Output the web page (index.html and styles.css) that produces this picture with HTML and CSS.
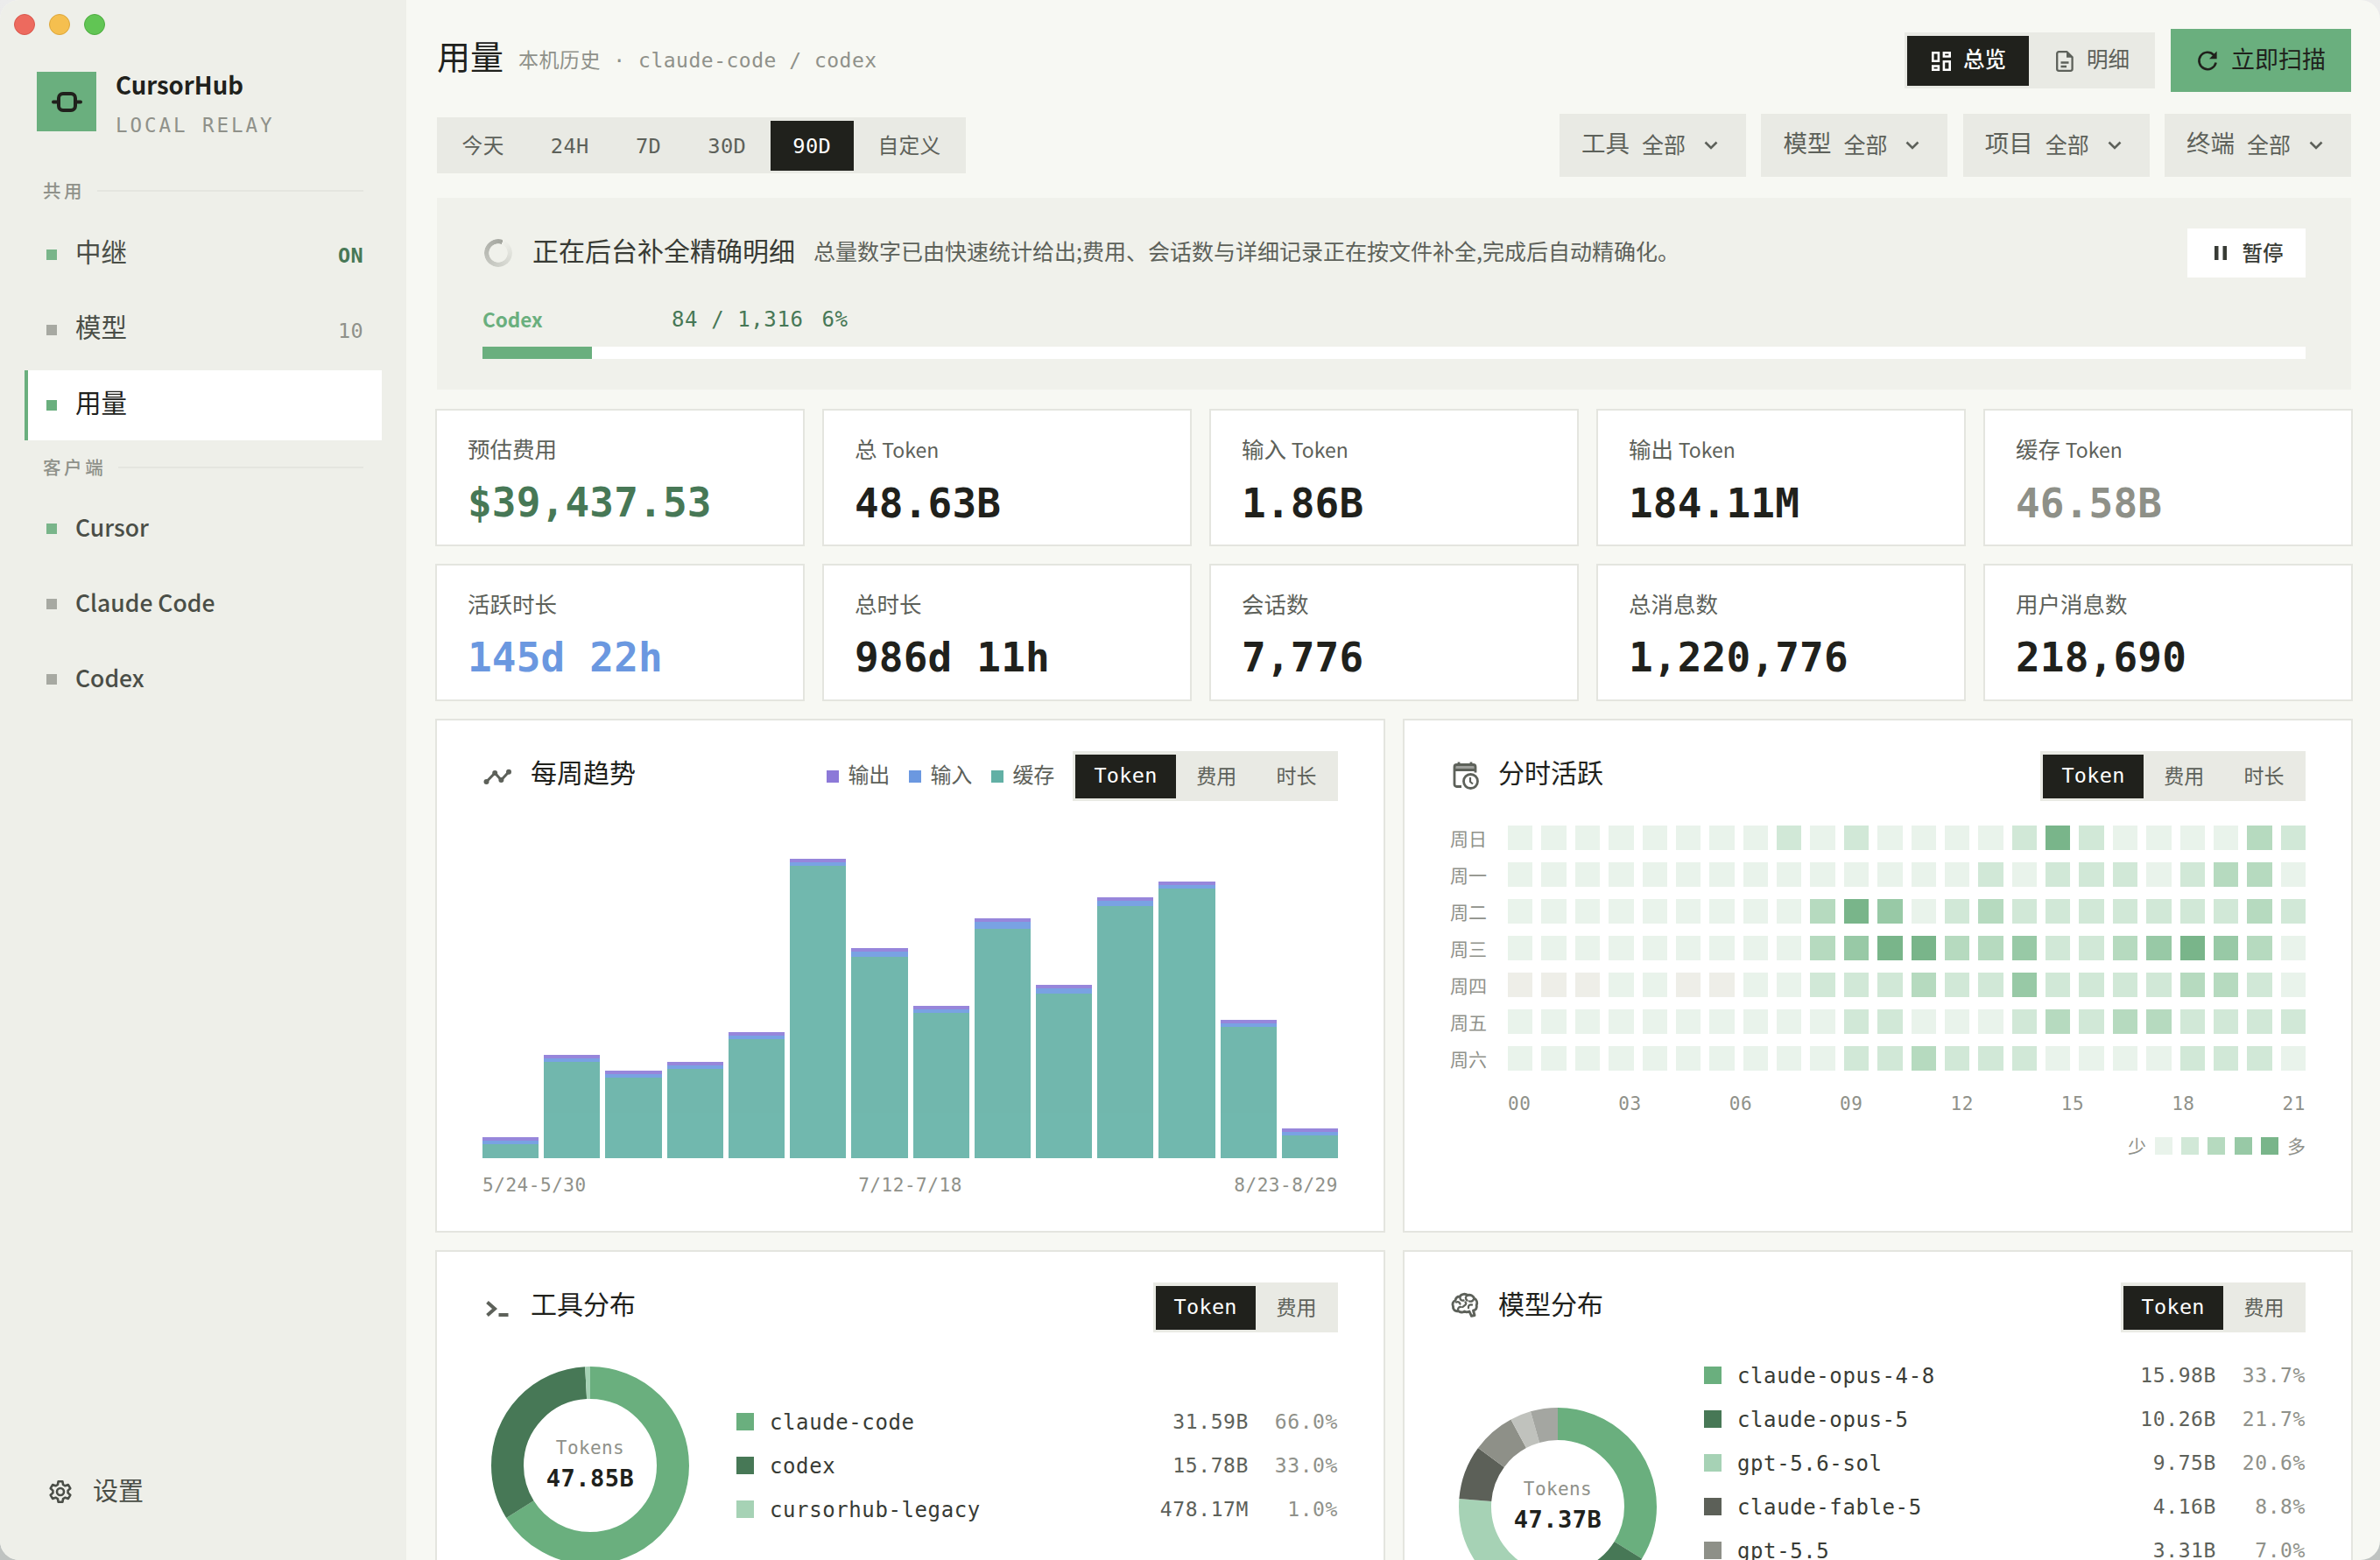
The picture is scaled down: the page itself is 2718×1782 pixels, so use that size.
FILE: index.html
```html
<!DOCTYPE html>
<html lang="zh-CN">
<head>
    <meta charset="UTF-8">
    <meta name="viewport" content="width=device-width, initial-scale=1.0">
    <title>CursorHub</title>
    <link rel="stylesheet" href="styles.css">
</head>
<body>
    <div class="window">
        <aside class="sidebar">
            <div class="lights">
                <span class="light red"></span>
                <span class="light yellow"></span>
                <span class="light green"></span>
            </div>

            <div class="brand">
                <div class="logo">
                    <svg viewBox="0 0 68 68" fill="none" stroke="#20211c" stroke-width="4" stroke-linecap="round">
                        <rect x="25" y="25" width="19" height="19" rx="5"/>
                        <path d="M19 34.5h6M44 34.5h6"/>
                    </svg>
                </div>
                <div>
                    <div class="brand-name">CursorHub</div>
                    <div class="brand-sub">LOCAL RELAY</div>
                </div>
            </div>

            <div class="nav-label first">共用</div>
            <nav class="nav">
                <a class="nav-item on"><i></i><span>中继</span><b class="state">ON</b></a>
                <a class="nav-item"><i></i><span>模型</span><b>10</b></a>
                <a class="nav-item on active"><i></i><span>用量</span></a>
            </nav>
            <div class="nav-label">客户端</div>
            <nav class="nav clients">
                <a class="nav-item on"><i></i><span>Cursor</span></a>
                <a class="nav-item"><i></i><span>Claude Code</span></a>
                <a class="nav-item"><i></i><span>Codex</span></a>
            </nav>

            <a class="settings">
                <svg viewBox="0 0 28 28" fill="none" stroke="currentColor" stroke-width="2.6" stroke-linejoin="round">
                    <path d="M11.6 2.3h4.8l.7 3.6 2.4 1.4 3.4-1.2 2.4 4.1-2.7 2.4v2.8l2.7 2.4-2.4 4.1-3.4-1.2-2.4 1.4-.7 3.6h-4.8l-.7-3.6-2.4-1.4-3.4 1.2-2.4-4.1 2.7-2.4v-2.8l-2.7-2.4 2.4-4.1 3.4 1.2 2.4-1.4z"/>
                    <circle cx="14" cy="14" r="4"/>
                </svg>
                <span>设置</span>
            </a>
        </aside>

        <main class="main">
            <header class="header">
                <h1>用量</h1>
                <span class="header-sub">本机历史 · claude-code / codex</span>
                <div class="segment views">
                    <button class="active">
                        <svg viewBox="0 0 26 26" fill="none" stroke="currentColor" stroke-width="2.6">
                            <path d="M3.3 3.3h6.6v9.4H3.3zM15.9 3.3h6.8v4.2h-6.8zM15.9 13.3h6.8v9.4h-6.8zM3.3 18.5h6.6v4.2H3.3z"/>
                        </svg>
                        <span>总览</span>
                    </button>
                    <button>
                        <svg viewBox="0 0 26 26" fill="none" stroke="currentColor" stroke-width="2.3" stroke-linejoin="round">
                            <path d="M15.5 2.2H6.2a2 2 0 0 0-2 2v17.6a2 2 0 0 0 2 2h13.4a2 2 0 0 0 2-2V8.4z"/>
                            <path d="M15 2.5v6.3h6.4z" fill="currentColor" stroke="none"/>
                            <path d="M8.5 14.5h9M8.5 19h6.5"/>
                        </svg>
                        <span>明细</span>
                    </button>
                </div>
                <button class="scan">
                    <svg viewBox="0 0 26 26" fill="none" stroke="currentColor" stroke-width="2.6">
                        <path d="M22.6 15.5A9.7 9.7 0 1 1 20.2 6.8"/>
                        <path d="M23.6 2.6v8.6H15z" fill="currentColor" stroke="none"/>
                    </svg>
                    <span>立即扫描</span>
                </button>
            </header>

            <div class="toolbar">
                <div class="segment range">
                    <button>今天</button>
                    <button>24H</button>
                    <button>7D</button>
                    <button>30D</button>
                    <button class="active">90D</button>
                    <button>自定义</button>
                </div>
                <div class="filters">
                    <div class="filter"><span>工具</span><em>全部</em><svg viewBox="0 0 24 24"><path d="M5.5 8.5l6.5 6.5 6.5-6.5"/></svg></div>
                    <div class="filter"><span>模型</span><em>全部</em><svg viewBox="0 0 24 24"><path d="M5.5 8.5l6.5 6.5 6.5-6.5"/></svg></div>
                    <div class="filter"><span>项目</span><em>全部</em><svg viewBox="0 0 24 24"><path d="M5.5 8.5l6.5 6.5 6.5-6.5"/></svg></div>
                    <div class="filter"><span>终端</span><em>全部</em><svg viewBox="0 0 24 24"><path d="M5.5 8.5l6.5 6.5 6.5-6.5"/></svg></div>
                </div>
            </div>

            <section class="notice">
                <div class="notice-head">
                    <div class="spinner"></div>
                    <strong>正在后台补全精确明细</strong>
                    <p>总量数字已由快速统计给出;费用、会话数与详细记录正在按文件补全,完成后自动精确化。</p>
                    <button class="pause">
                        <svg viewBox="0 0 14 16" fill="currentColor"><path d="M0 0h4.5v16H0zM9.5 0H14v16H9.5z"/></svg>
                        暂停
                    </button>
                </div>
                <div class="progress-info">
                    <span class="progress-name">Codex</span>
                    <span class="progress-count">84 / 1,316</span>
                    <span class="progress-pct">6%</span>
                </div>
                <div class="progress"><div class="progress-fill" style="width: 6%"></div></div>
            </section>

            <section class="stats">
                <div class="stat green"><label>预估费用</label><strong>$39,437.53</strong></div>
                <div class="stat"><label>总 <small>Token</small></label><strong>48.63B</strong></div>
                <div class="stat"><label>输入 <small>Token</small></label><strong>1.86B</strong></div>
                <div class="stat"><label>输出 <small>Token</small></label><strong>184.11M</strong></div>
                <div class="stat muted"><label>缓存 <small>Token</small></label><strong>46.58B</strong></div>
                <div class="stat blue"><label>活跃时长</label><strong>145d 22h</strong></div>
                <div class="stat"><label>总时长</label><strong>986d 11h</strong></div>
                <div class="stat"><label>会话数</label><strong>7,776</strong></div>
                <div class="stat"><label>总消息数</label><strong>1,220,776</strong></div>
                <div class="stat"><label>用户消息数</label><strong>218,690</strong></div>
            </section>

            <section class="panels">
                <div class="panel">
                    <div class="panel-head">
                        <svg class="panel-icon" viewBox="0 0 36 36" fill="none" stroke="currentColor" stroke-width="3">
                            <path d="M4.5 24l9.700-10 7.200 8L30 12.800"/>
                            <g fill="currentColor" stroke="none">
                                <circle cx="4.500" cy="24" r="3"/><circle cx="14.200" cy="14" r="3"/>
                                <circle cx="21.400" cy="22" r="3"/><circle cx="30" cy="12.800" r="3"/>
                            </g>
                        </svg>
                        <h2>每周趋势</h2>
                        <div class="keys">
                            <span><i class="output"></i>输出</span>
                            <span><i class="input"></i>输入</span>
                            <span><i class="cache"></i>缓存</span>
                        </div>
                        <div class="segment small">
                            <button class="active">Token</button>
                            <button>费用</button>
                            <button>时长</button>
                        </div>
                    </div>
                    <div class="bars" id="bars"></div>
                    <div class="axis"><span>5/24-5/30</span><span>7/12-7/18</span><span>8/23-8/29</span></div>
                </div>

                <div class="panel">
                    <div class="panel-head">
                        <svg class="panel-icon" viewBox="1 1.5 36 36" fill="none" stroke="currentColor" stroke-width="2.8" stroke-linejoin="round">
                            <path d="M14 31H8.500a2.500 2.500 0 0 1-2.500-2.500V8.500A2.500 2.500 0 0 1 8.500 6h19A2.500 2.500 0 0 1 30 8.500V15M6 12h24M11 3v4M25 3v4"/>
                            <path d="M7 7h22v4H7z" fill="currentColor" fill-opacity=".6" stroke="none"/>
                            <circle cx="24.500" cy="25" r="8"/>
                            <path d="M24 20.500v5l3 2.500" stroke-width="2.200"/>
                        </svg>
                        <h2>分时活跃</h2>
                        <div class="segment small">
                            <button class="active">Token</button>
                            <button>费用</button>
                            <button>时长</button>
                        </div>
                    </div>
                    <div class="heatmap" id="heatmap"></div>
                    <div class="axis hours">
                        <span>00</span><span>03</span><span>06</span><span>09</span><span>12</span><span>15</span><span>18</span><span>21</span>
                    </div>
                    <div class="scale">
                        <span>少</span><i class="l1"></i><i class="l2"></i><i class="l3"></i><i class="l4"></i><i class="l5"></i><span>多</span>
                    </div>
                </div>

                <div class="panel">
                    <div class="panel-head">
                        <svg class="panel-icon" viewBox="0 0 36 36" fill="none" stroke="currentColor" stroke-width="4">
                            <path d="M5.500 11.500l8.500 7.500-8.500 7.500M18.500 26h11"/>
                        </svg>
                        <h2>工具分布</h2>
                        <div class="segment small">
                            <button class="active">Token</button>
                            <button>费用</button>
                        </div>
                    </div>
                    <div class="share" id="tools"></div>
                </div>

                <div class="panel">
                    <div class="panel-head">
                        <svg class="panel-icon" viewBox="1 2.5 36 36" fill="none" stroke="currentColor" stroke-width="2.900" stroke-linecap="round" stroke-linejoin="round">
                            <path d="M12 7.500c2-3 6.500-3.500 9-1.500 3-1 6.500.5 7.500 3.500 2.800 1.500 4 5 2.700 8 .8 3-.7 5.500-3.700 6l1.500 5.500-3.500.8-2.500-5.300c-2 1-4 1-5.500 0-2.500 1.500-5 1.500-7-.5-3.500.8-6.500-1.500-6-5-1.500-3 0-6 2.500-7 .5-2.500 2.500-4.500 5-4.500z"/>
                            <path d="M12.500 8c-.5 3 1.500 4.500 4 4M21 6.500c-3 1-2.500 4-.5 5.500M28 10.500c-1 2.500-3 3-5 2.500M8 14c2-1 4 0 4.500 2M18.500 14c2.500 2-1.500 4-3 5.500M10 23c0-2.500 1.500-4 3.500-3.500M26 17c-3-.5-4.500 1-4 3.500" stroke-width="2.300"/>
                        </svg>
                        <h2>模型分布</h2>
                        <div class="segment small">
                            <button class="active">Token</button>
                            <button>费用</button>
                        </div>
                    </div>
                    <div class="share" id="models"></div>
                </div>
            </section>
        </main>
    </div>

    <script>
        // weekly bars: [total height, input height] in px
        const weeks = [[24, 4], [118, 4], [100, 4], [110, 4], [144, 4], [342, 4], [240, 6],
            [174, 4], [274, 8], [198, 6], [298, 6], [316, 4], [158, 4], [34, 4]];
        document.getElementById('bars').innerHTML = weeks.map(([total, input]) =>
            `<div class="bar" style="height: ${total}px"><i class="output"></i><i class="input" style="height: ${input}px"></i><i class="cache"></i></div>`
        ).join('');

        // one digit per hour, 0 = nothing, 5 = busiest
        const days = [
            ['周日', '111111112121111252111132'],
            ['周一', '111111111111112122212331'],
            ['周二', '111111111354123222222232'],
            ['周三', '111111111345533422345431'],
            ['周四', '000110011222322422223321'],
            ['周五', '111111111122111232332222'],
            ['周六', '111111111122322211112221']
        ];
        document.getElementById('heatmap').innerHTML = days.map(([name, levels]) =>
            `<span>${name}</span>` + [...levels].map(l => `<i class="l${l}"></i>`).join('')
        ).join('');

        function renderShare(id, total, rows) {
            const r = 94.5;
            const length = 2 * Math.PI * r;
            const sum = rows.reduce((s, row) => s + row[2], 0);
            let offset = 0;
            const arcs = rows.map(([name, value, pct, color]) => {
                const part = pct / sum * length;
                const arc = `<circle cx="123" cy="123" r="${r}" stroke="${color}" stroke-dasharray="${part} ${length - part}" stroke-dashoffset="${-offset}"/>`;
                offset += part;
                return arc;
            }).join('');
            const list = rows.map(([name, value, pct, color]) =>
                `<li><i style="background: ${color}"></i><span>${name}</span><b>${value}</b><em>${pct.toFixed(1)}%</em></li>`
            ).join('');
            document.getElementById(id).innerHTML =
                `<div class="donut"><svg viewBox="0 0 246 246">${arcs}</svg><div class="donut-text"><small>Tokens</small><strong>${total}</strong></div></div><ul>${list}</ul>`;
        }

        renderShare('tools', '47.85B', [
            ['claude-code', '31.59B', 66.0, '#6aaf7e'],
            ['codex', '15.78B', 33.0, '#477856'],
            ['cursorhub-legacy', '478.17M', 1.0, '#a6d2b5']
        ]);
        renderShare('models', '47.37B', [
            ['claude-opus-4-8', '15.98B', 33.7, '#6aaf7e'],
            ['claude-opus-5', '10.26B', 21.7, '#477856'],
            ['gpt-5.6-sol', '9.75B', 20.6, '#a6d2b5'],
            ['claude-fable-5', '4.16B', 8.8, '#5c6058'],
            ['gpt-5.5', '3.31B', 7.0, '#8e9088'],
            ['gpt-5.4', '1.61B', 3.4, '#c0c2bd'],
            ['其他', '2.18B', 4.6, '#a4a6a1']
        ]);
    </script>
</body>
</html>
```
FILE: styles.css
```css
* {
    box-sizing: border-box;
}
body {
    margin: 0;
    height: 1782px;
    overflow: hidden;
    background: linear-gradient(#ececec, #bfc3c1);
    font-family: "Noto Sans CJK SC", "Noto Sans", sans-serif;
    color: #20211c;
    line-height: 1;
}
button {
    border: 0;
    padding: 0;
    background: none;
    font: inherit;
    color: inherit;
    display: flex;
    align-items: center;
    justify-content: center;
    white-space: nowrap;
}
i, em {
    font-style: normal;
}
h1, h2, p, ul {
    margin: 0;
    padding: 0;
    list-style: none;
}
.window {
    display: flex;
    height: 1782px;
    border-radius: 22px;
    overflow: hidden;
    background: #f7f8f3;
}

/* Sidebar */
.sidebar {
    width: 464px;
    flex: none;
    background: #eeefe9;
    padding: 16px 28px 0;
    display: flex;
    flex-direction: column;
}
.lights {
    display: flex;
    gap: 16px;
    margin-left: -12px;
}
.light {
    width: 24px;
    height: 24px;
    border-radius: 50%;
}
.light.red { background: #ed6a5e; border: 1px solid #d8574c; }
.light.yellow { background: #f5bf4f; border: 1px solid #dba63b; }
.light.green { background: #61c554; border: 1px solid #4dab3f; }
.brand {
    display: flex;
    gap: 22px;
    height: 68px;
    margin: 42px 0 0 14px;
}
.logo {
    width: 68px;
    height: 68px;
    background: #6aaf7e;
}
.brand-name {
    font-size: 27.5px;
    font-weight: 600;
    line-height: 28px;
}
.brand-sub {
    font-family: "DejaVu Sans Mono", monospace;
    font-size: 22.5px;
    letter-spacing: 2.95px;
    line-height: 28px;
    margin-top: 19px;
    color: #8f918a;
}
.nav-label {
    display: flex;
    align-items: center;
    height: 61px;
    padding: 0 21px;
    font-size: 20.5px;
    font-weight: 500;
    letter-spacing: 3.6px;
    color: #8f918a;
}
.nav-label.first {
    margin: 37px 0 3px;
}
.nav-label::after {
    content: "";
    flex: 1;
    height: 2px;
    margin-left: 14px;
    background: #e4e5df;
}
.nav {
    display: flex;
    flex-direction: column;
    gap: 6px;
}
.nav-item {
    display: flex;
    align-items: center;
    height: 80px;
    padding: 0 21px;
    border-left: 4px solid transparent;
    font-size: 29.5px;
    color: #4a4e47;
}
.nav-item span {
    margin-bottom: 8px;
}
.clients .nav-item {
    font-size: 26.5px;
    font-weight: 500;
}
.clients span {
    margin-bottom: 3px;
}
.nav-item i {
    width: 12px;
    height: 12px;
    margin-right: 21px;
    background: #a7a9a2;
}
.nav-item.on i {
    background: #79b58a;
}
.nav-item b {
    margin-left: auto;
    margin-top: 3px;
    font-family: "DejaVu Sans Mono", monospace;
    font-size: 23.5px;
    font-weight: 400;
    letter-spacing: 0.3px;
    color: #8f918a;
}
.nav-item .state {
    font-weight: 700;
    color: #477856;
}
.nav-item.active {
    background: #fff;
    border-left-color: #6aaf7e;
    color: #20211c;
}
.nav-item.active i {
    background: #6aaf7e;
}
.settings {
    display: flex;
    align-items: center;
    gap: 23px;
    margin: auto 0 62px 27px;
    font-size: 29px;
    color: #4a4e47;
}
.settings svg {
    width: 28px;
    height: 28px;
}
.settings span {
    margin-bottom: 4px;
}

/* Header */
.main {
    flex: 1;
    padding: 33px 33px 0 35px;
}
.header {
    display: flex;
    align-items: center;
    height: 72px;
}
.header h1 {
    font-size: 38px;
    font-weight: 400;
    margin-top: -12px;
}
.header-sub {
    font-family: "DejaVu Sans Mono", "Noto Sans CJK SC", monospace;
    font-size: 23px;
    letter-spacing: 0.5px;
    margin-left: 17px;
    color: #8f918a;
}
.segment {
    display: flex;
    gap: 2px;
    height: 64px;
    padding: 4px 3px 3px 3px;
    background: #e9eae4;
    color: #5d615a;
}
.segment .active {
    background: #20211c;
    color: #fff;
    font-weight: 500;
}
.views {
    margin-left: auto;
    font-size: 24.5px;
}
.views button {
    gap: 12px;
    padding: 0 26px 0 26px;
}
.views span,
.scan span {
    margin-bottom: 5px;
}
.views svg,
.scan svg {
    width: 26px;
    height: 26px;
}
.scan {
    gap: 14px;
    width: 206px;
    height: 72px;
    margin-left: 18px;
    background: #6aaf7e;
    font-size: 27px;
}
.toolbar {
    display: flex;
    align-items: center;
    justify-content: space-between;
    height: 72px;
    margin-top: 25px;
}
.range button {
    padding: 3px 25.6px 0;
    font-family: "DejaVu Sans Mono", "Noto Sans CJK SC", monospace;
    font-size: 23.7px;
    letter-spacing: 0.35px;
}
.filters {
    display: flex;
    gap: 17.3px;
}
.filter {
    display: flex;
    align-items: center;
    width: 213px;
    height: 72px;
    padding-left: 25px;
    background: #e9eae4;
    color: #5d615a;
}
.filter span {
    font-size: 27.5px;
    margin-top: -7px;
}
.filter em {
    font-size: 25px;
    margin: -3px 0 0 14px;
}
.filter svg {
    width: 24px;
    height: 24px;
    margin-left: 17px;
    fill: none;
    stroke: #5d615a;
    stroke-width: 2.6;
}

/* Background scan notice */
.notice {
    height: 219px;
    margin-top: 24px;
    padding: 35px 52px 0;
    background: #f0f1eb;
}
.notice-head {
    display: flex;
    align-items: center;
    height: 56px;
}
.spinner {
    width: 32px;
    height: 32px;
    margin: 0 23px 0 2px;
    border-radius: 50%;
    background: conic-gradient(from 20deg, #f0f1eb, #a3a59e);
    -webkit-mask: radial-gradient(closest-side, transparent 65%, #000 69%);
    mask: radial-gradient(closest-side, transparent 65%, #000 69%);
}
.notice strong {
    font-size: 30px;
    font-weight: 400;
    color: #383b35;
    margin-top: -9px;
}
.notice p {
    font-size: 25px;
    color: #5d615a;
    margin: -5px 0 0 21px;
}
.pause {
    gap: 18px;
    width: 135px;
    height: 56px;
    padding-left: 5px;
    margin-left: auto;
    background: #fff;
    color: #383b35;
    font-size: 23.5px;
    font-weight: 500;
}
.pause svg {
    width: 14px;
    height: 16px;
}
.progress-info {
    display: flex;
    height: 30px;
    margin-top: 33px;
    line-height: 30px;
    font-family: "DejaVu Sans Mono", monospace;
    font-size: 24px;
    letter-spacing: 0.6px;
    color: #477856;
}
.progress-name {
    width: 216px;
    font-family: "Noto Sans CJK SC", sans-serif;
    font-size: 22.5px;
    font-weight: 600;
    line-height: 28px;
    letter-spacing: 0;
    color: #6aaf7e;
}
.progress-pct {
    margin-left: 21px;
}
.progress {
    height: 14px;
    margin-top: 16px;
    background: #fff;
}
.progress-fill {
    height: 14px;
    background: #6aaf7e;
}

/* Stat cards */
.stats {
    display: grid;
    grid-template-columns: repeat(5, 1fr);
    gap: 24px;
    margin-top: 24px;
}
.stat {
    height: 153px;
    padding: 26px 35px 0;
    background: #fff;
    box-shadow: 0 0 0 2px #e4e5df;
}
.stat label {
    display: block;
    font-size: 25.5px;
    line-height: 34px;
    color: #5d615a;
}
.stat small {
    font-size: 23px;
}
.stat strong {
    display: block;
    margin-top: 17px;
    font-family: "DejaVu Sans Mono", monospace;
    font-size: 46px;
    line-height: 56px;
    letter-spacing: 0.17px;
    white-space: pre;
}
.stat.green strong { color: #477856; }
.stat.muted strong { color: #8e9088; }
.stat.blue strong { color: #6b98e0; }

/* Chart panels */
.panels {
    display: grid;
    grid-template-columns: 1fr 1fr;
    gap: 24px;
    margin-top: 24px;
}
.panel {
    height: 583px;
    padding: 35px 52px 0;
    background: #fff;
    box-shadow: 0 0 0 2px #e4e5df;
}
.panel-head {
    display: flex;
    align-items: center;
    height: 57px;
}
.panel-icon {
    width: 36px;
    height: 36px;
    color: #5d615a;
}
.panel h2 {
    font-size: 30px;
    font-weight: 400;
    margin: -11px auto 0 19px;
}
.segment.small {
    height: 57px;
    padding: 4px 3px 3px 3px;
    font-size: 23px;
}
.segment.small button {
    padding: 0 21.6px 3px;
}
.segment.small .active {
    padding: 0 21px;
    font-family: "DejaVu Sans Mono", monospace;
    font-weight: 400;
    font-size: 23.5px;
    letter-spacing: 0.3px;
}
.keys {
    display: flex;
    gap: 22px;
    margin-right: 21px;
    font-size: 24px;
    line-height: 28px;
    color: #5d615a;
}
.keys span {
    display: flex;
    align-items: center;
    margin-top: -5px;
}
.keys i {
    width: 14px;
    height: 14px;
    margin: 5px 10px 0 0;
}
.output { background: #8c79d8; }
.input { background: #6b98e0; }
.cache { background: #62b0a5; }
.bars {
    display: flex;
    align-items: flex-end;
    gap: 6px;
    height: 380px;
    margin-top: 28px;
}
.bar {
    flex: 1;
    display: flex;
    flex-direction: column;
    opacity: 0.9;
}
.bar .output {
    height: 4px;
}
.bar .cache {
    flex: 1;
}
.axis {
    display: flex;
    justify-content: space-between;
    margin-top: 18px;
    font-family: "DejaVu Sans Mono", monospace;
    font-size: 21px;
    letter-spacing: 0.55px;
    line-height: 26px;
    color: #8f918a;
}
.heatmap {
    display: grid;
    grid-template-columns: 56px repeat(24, 1fr);
    column-gap: 10px;
    row-gap: 14px;
    margin-top: 28px;
    font-size: 21px;
    line-height: 29px;
    color: #8f918a;
}
.heatmap i,
.heatmap span {
    height: 28px;
}
.hours {
    margin: 25px 0 0 66px;
}
.scale {
    display: flex;
    align-items: center;
    justify-content: flex-end;
    gap: 10.2px;
    height: 20px;
    margin-top: 25px;
    font-size: 21px;
    color: #8f918a;
}
.scale span {
    margin-bottom: 2px;
}
.scale i {
    width: 20px;
    height: 20px;
}
.l0 { background: #eeeee8; }
.l1 { background: #e9f3eb; }
.l2 { background: #d1e8d7; }
.l3 { background: #b6dabf; }
.l4 { background: #98c9a6; }
.l5 { background: #79b58a; }

/* Donut + list */
.share {
    display: flex;
    align-items: center;
    gap: 44px;
    margin-top: 29px;
}
.donut {
    display: grid;
    flex: none;
    width: 246px;
    height: 246px;
}
.donut svg,
.donut-text {
    grid-area: 1 / 1;
}
.donut svg {
    transform: rotate(-90deg);
    fill: none;
    stroke-width: 37;
}
.donut-text {
    display: flex;
    flex-direction: column;
    align-items: center;
    justify-content: center;
    gap: 10px;
    padding-bottom: 3px;
    font-family: "DejaVu Sans Mono", monospace;
}
.donut-text small {
    font-size: 21px;
    letter-spacing: 0.4px;
    color: #8f918a;
}
.donut-text strong {
    font-size: 27px;
    letter-spacing: 0.5px;
}
.share ul {
    flex: 1;
    display: flex;
    flex-direction: column;
    gap: 10px;
    font-family: "DejaVu Sans Mono", "Noto Sans CJK SC", monospace;
}
.share li {
    display: flex;
    align-items: center;
    height: 40px;
    font-size: 23px;
    letter-spacing: 0.6px;
}
.share li i {
    width: 20px;
    height: 20px;
    margin-right: 18px;
}
.share li span {
    font-size: 24px;
    margin-top: 2px;
    color: #383b35;
}
.share li b {
    margin-left: auto;
    font-weight: 400;
    color: #5d615a;
}
.share li em {
    width: 102px;
    text-align: right;
    color: #8f918a;
}
```
